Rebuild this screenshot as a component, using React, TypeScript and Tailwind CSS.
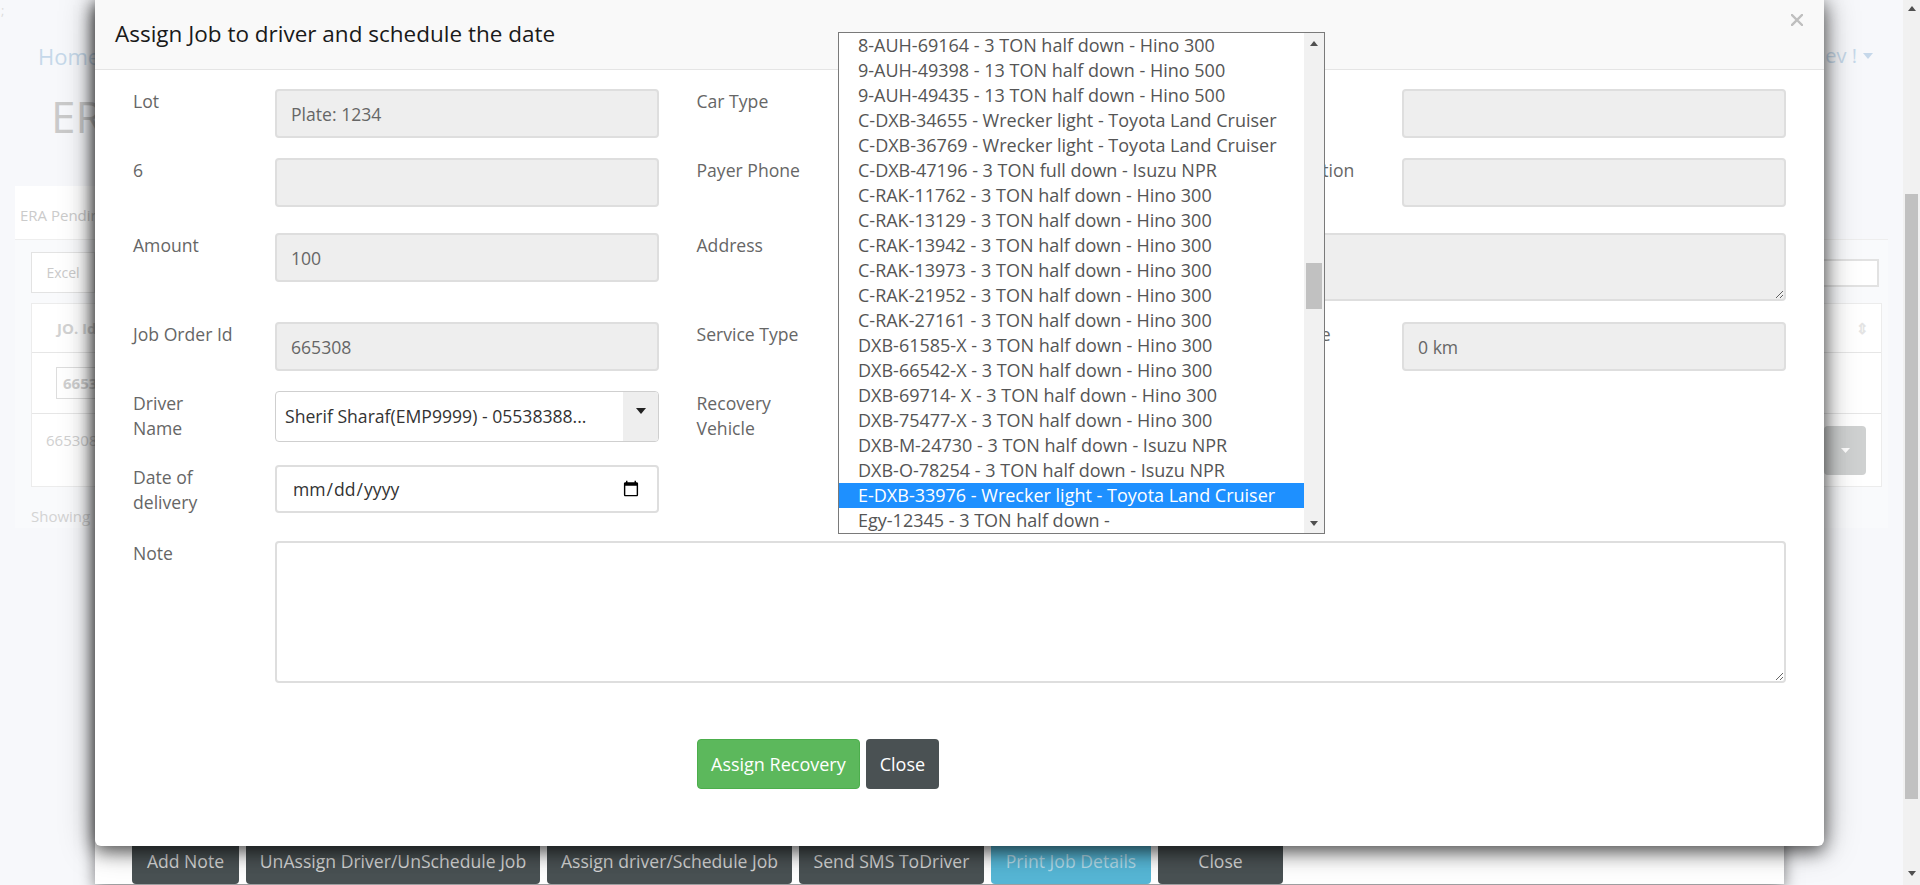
import type { ReactNode } from "react";

const vehicles = [
  "8-AUH-69164 - 3 TON half down - Hino 300",
  "9-AUH-49398 - 13 TON half down - Hino 500",
  "9-AUH-49435 - 13 TON half down - Hino 500",
  "C-DXB-34655 - Wrecker light - Toyota Land Cruiser",
  "C-DXB-36769 - Wrecker light - Toyota Land Cruiser",
  "C-DXB-47196 - 3 TON full down - Isuzu NPR",
  "C-RAK-11762 - 3 TON half down - Hino 300",
  "C-RAK-13129 - 3 TON half down - Hino 300",
  "C-RAK-13942 - 3 TON half down - Hino 300",
  "C-RAK-13973 - 3 TON half down - Hino 300",
  "C-RAK-21952 - 3 TON half down - Hino 300",
  "C-RAK-27161 - 3 TON half down - Hino 300",
  "DXB-61585-X - 3 TON half down - Hino 300",
  "DXB-66542-X - 3 TON half down - Hino 300",
  "DXB-69714- X - 3 TON half down - Hino 300",
  "DXB-75477-X - 3 TON half down - Hino 300",
  "DXB-M-24730 - 3 TON half down - Isuzu NPR",
  "DXB-O-78254 - 3 TON half down - Isuzu NPR",
  "E-DXB-33976 - Wrecker light - Toyota Land Cruiser",
  "Egy-12345 - 3 TON half down -",
];

const selectedVehicle = "E-DXB-33976 - Wrecker light - Toyota Land Cruiser";

export default function App() {
  return (
    <div className="relative flex h-[885px] w-[1920px] overflow-hidden bg-[#f7f8fb] font-['Open_Sans',sans-serif]">
      <BackgroundPage />
      <WindowScrollbar />
      <JobDetailsModal />
      <AssignModal />
    </div>
  );
}

function BackgroundPage() {
  return (
    <div className="flex-1">
      <div className="h-[26px] pl-[1px] text-[13px] leading-[20px] text-[#dcdcdc]">;</div>
      <div className="flex h-[60px] items-center justify-between pl-[38px] pr-[30px]">
        <span className="text-[22px] text-[#c6d8ea]">Home</span>
        <span className="flex items-center gap-[6px] text-[20px] text-[#c6d8ea]">
          Welcome sherifdev !
          <Triangle down className="h-[6px] w-[10px] fill-[#c6d8ea]" />
        </span>
      </div>
      <div className="h-[60px] pl-[51px] text-[44px] leading-[60px] text-[#cacaca]">ERA Pending Jobs</div>
      <div className="ml-[15px] mt-[40px] flex h-[59px] w-[150px] items-center bg-white pl-[5px] text-[15px] text-[#cbcbcb]">
        ERA Pending
      </div>
      <div className="-mt-[6px] ml-[15px] mr-[15px] border-t border-[#eee] bg-[#f9fafc] px-[31px] pt-[12px]">
        <div className="flex items-center justify-between">
          <div className="-ml-[15px] flex h-[41px] w-[64px] items-center justify-center border border-[#e3e3e3] bg-white text-[14px] text-[#cacaca]">
            Excel
          </div>
          <div className="-mr-[22px] h-[28px] w-[220px] border-2 border-[#e2e2e2] bg-white" />
        </div>
        <div className="-ml-[15px] -mr-[25px] mt-[10px] border border-[#ececec] bg-white">
          <div className="flex h-[49px] items-center justify-between border-b border-[#e6e6e6] pl-[25px] pr-[12px] text-[15px] font-bold text-[#d2d2d2]">
            <span>JO. Id</span>
            <span className="text-[#e4e4e4]">⇕</span>
          </div>
          <div className="flex h-[61px] items-center border-b border-[#e6e6e6] pl-[24px]">
            <div className="flex h-[32px] w-[120px] items-center border border-[#ddd] pl-[6px] text-[15px] font-bold text-[#cfcfcf]">665308</div>
          </div>
          <div className="flex h-[72px] items-start justify-between pl-[14px] pr-[15px] pt-[12px] text-[15px] text-[#d0d0d0]">
            <span className="pt-[3px]">665308</span>
            <div className="flex h-[49px] w-[42px] items-center justify-center rounded-[4px] bg-[#cfd1d1]">
              <Triangle down className="h-[5px] w-[9px] fill-white" />
            </div>
          </div>
        </div>
        <div className="-ml-[15px] pt-[18px] text-[15px] text-[#d3d3d3]">Showing 1 to 1 of 1 entries</div>
      </div>
    </div>
  );
}

function WindowScrollbar() {
  return (
    <div className="flex h-full w-[17px] flex-col bg-[#f1f1f1]">
      <div className="flex h-[17px] items-center justify-center">
        <Triangle className="h-[5px] w-[8px] fill-[#505050]" />
      </div>
      <div className="mx-[2px] mt-[177px] h-[605px] bg-[#c1c1c1]" />
      <div className="flex-1" />
      <div className="flex h-[17px] items-start justify-center pt-[3px]">
        <Triangle down className="h-[5px] w-[8px] fill-[#505050]" />
      </div>
    </div>
  );
}

function JobDetailsModal() {
  const buttons = [
    { label: "Add Note", w: "w-[107px]", cls: "bg-[#495153] text-[#d6d6d6]" },
    { label: "UnAssign Driver/UnSchedule Job", w: "w-[294px]", cls: "bg-[#495153] text-[#d6d6d6]" },
    { label: "Assign driver/Schedule Job", w: "w-[245px]", cls: "bg-[#495153] text-[#d6d6d6]" },
    { label: "Send SMS ToDriver", w: "w-[185px]", cls: "bg-[#495153] text-[#d6d6d6]" },
    { label: "Print Job Details", w: "w-[160px]", cls: "bg-[#56b6d5] text-[#b3dbe9]" },
    { label: "Close", w: "w-[125px]", cls: "bg-[#495153] text-[#d6d6d6]" },
  ];
  return (
    <div className="absolute left-[95px] top-0 flex h-[884px] w-[1689px] items-end bg-white pl-[37px] shadow-[0_5px_15px_rgba(0,0,0,0.5)]">
      <div className="flex gap-[7px]">
        {buttons.map((b) => (
          <div
            key={b.label}
            className={`flex h-[46px] items-center justify-center whitespace-nowrap rounded-[4px] text-[17.6px] ${b.w} ${b.cls}`}
          >
            {b.label}
          </div>
        ))}
      </div>
    </div>
  );
}

function AssignModal() {
  return (
    <div className="absolute left-[95px] top-0 h-[846px] w-[1729px] rounded-b-[6px] bg-white shadow-[0_5px_18px_rgba(0,0,0,0.6),0_0_34px_rgba(0,0,0,0.35)]">
      <div className="flex h-[70px] items-start justify-between border-b border-[#e5e5e5] bg-[#f9f9f9] pl-[20px] pr-[21px]">
        <h4 className="mt-[18px] text-[22.5px] leading-[32px] text-[#1a1a1a]">Assign Job to driver and schedule the date</h4>
        <svg viewBox="0 0 12 12" className="mt-[14px] h-[12px] w-[12px]">
          <path d="M1 1 L11 11 M11 1 L1 11" stroke="#bfbfbf" strokeWidth="2.4" strokeLinecap="square" />
        </svg>
      </div>

      <div className="pl-[38px]">
        <Row className="mt-[19px]">
          <Field label="Lot"><ReadOnly value="Plate: 1234" /></Field>
          <Field label="Car Type"><ReadOnly value="Sedan" /></Field>
          <Field label="Color"><ReadOnly value="" /></Field>
        </Row>
        <Row className="mt-[20px]">
          <Field label="6"><ReadOnly value="" /></Field>
          <Field label="Payer Phone"><ReadOnly value="" /></Field>
          <Field label="Destination"><ReadOnly value="" /></Field>
        </Row>
        <Row className="mt-[26px]">
          <Field label="Amount"><ReadOnly value="100" /></Field>
          <div className="flex w-[1089.5px]">
            <Label>Address</Label>
            <textarea
              readOnly
              className="h-[68px] flex-1 rounded-[4px] border-2 border-[#dedede] bg-[#eee] px-[14px] py-[8px] text-[17.6px] text-[#666] outline-none"
            />
          </div>
        </Row>
        <Row className="mt-[21px]">
          <Field label="Job Order Id"><ReadOnly value="665308" /></Field>
          <Field label="Service Type"><ReadOnly value="Recovery" /></Field>
          <Field label="Distance"><ReadOnly value="0 km" /></Field>
        </Row>
        <Row className="mt-[20px]">
          <Field label={<>Driver<br />Name</>}>
            <div className="flex h-[51px] w-[384px] overflow-hidden rounded-[4px] border border-[#cfcfcf] bg-white">
              <div className="flex flex-1 items-center whitespace-nowrap pl-[9px] text-[17.6px] text-[#333]">Sherif Sharaf(EMP9999) - 05538388...</div>
              <div className="flex w-[35px] justify-center bg-[#eee] pt-[16px]">
                <Triangle down className="h-[6px] w-[10px] fill-[#222]" />
              </div>
            </div>
          </Field>
          <Field label={<>Recovery<br />Vehicle</>}>
            <div className="flex h-[51px] w-[384px] items-center rounded-[4px] border border-[#cfcfcf] bg-white pl-[9px] text-[17.6px] text-[#333]">
              E-DXB-33976
            </div>
          </Field>
          <div className="w-[526px]" />
        </Row>
        <Row className="mt-[23px]">
          <Field label={<>Date of<br />delivery</>}>
            <input
              type="date"
              className="h-[48px] w-[384px] rounded-[4px] border-2 border-[#dedede] bg-white px-[15px] text-[17.6px] text-[#333] outline-none"
            />
          </Field>
        </Row>
        <Row className="mt-[26px]">
          <div className="flex w-[1653px]">
            <Label>Note</Label>
            <textarea className="h-[142px] flex-1 rounded-[4px] border-2 border-[#dedede] bg-white px-[14px] py-[8px] text-[17.6px] text-[#333] outline-none" />
          </div>
        </Row>
        <div className="mt-[56px] flex gap-[6px] pl-[564px]">
          <button className="h-[50px] rounded-[4px] border border-[#4cae4c] bg-[#5cb85c] px-[13px] text-[18px] text-white">
            Assign Recovery
          </button>
          <button className="h-[50px] rounded-[4px] bg-[#4a5153] px-[14px] text-[18px] text-white">Close</button>
        </div>
      </div>

      <VehicleList />
    </div>
  );
}

function VehicleList() {
  return (
    <div className="absolute left-[743px] top-[32px] flex h-[502px] w-[487px] overflow-hidden border border-[#7a7a7a] bg-white">
      <div className="flex-1">
        {vehicles.map((v) => (
          <div
            key={v}
            className={`h-[25px] overflow-hidden whitespace-nowrap pl-[19px] text-[18px] leading-[25px] ${
              v === selectedVehicle ? "bg-[#1e90ff] text-white" : "text-[#555]"
            }`}
          >
            {v}
          </div>
        ))}
      </div>
      <div className="flex w-[20px] flex-col bg-[#f1f1f1]">
        <div className="flex h-[20px] items-center justify-center">
          <Triangle className="h-[5px] w-[8px] fill-[#505050]" />
        </div>
        <div className="mx-[2px] mt-[210px] h-[46px] bg-[#c1c1c1]" />
        <div className="flex-1" />
        <div className="flex h-[20px] items-center justify-center">
          <Triangle down className="h-[5px] w-[8px] fill-[#505050]" />
        </div>
      </div>
    </div>
  );
}

function Row({ children, className }: { children: ReactNode; className?: string }) {
  return <div className={`flex items-start gap-[37.5px] ${className ?? ""}`}>{children}</div>;
}

function Field({ label, children }: { label: ReactNode; children: ReactNode }) {
  return (
    <div className="flex w-[526px]">
      <Label>{label}</Label>
      {children}
    </div>
  );
}

function Label({ children }: { children: ReactNode }) {
  return <div className="w-[142px] shrink-0 whitespace-nowrap text-[17.6px] leading-[25px] text-[#666]">{children}</div>;
}

function ReadOnly({ value }: { value: string }) {
  return (
    <input
      readOnly
      value={value}
      className="h-[49px] w-[384px] rounded-[4px] border-2 border-[#dedede] bg-[#eee] px-[14px] text-[17.6px] text-[#666] outline-none"
    />
  );
}

function Triangle({ down, className }: { down?: boolean; className?: string }) {
  return (
    <svg viewBox="0 0 10 6" className={className} preserveAspectRatio="none">
      <polygon points={down ? "0,0 10,0 5,6" : "0,6 10,6 5,0"} />
    </svg>
  );
}
